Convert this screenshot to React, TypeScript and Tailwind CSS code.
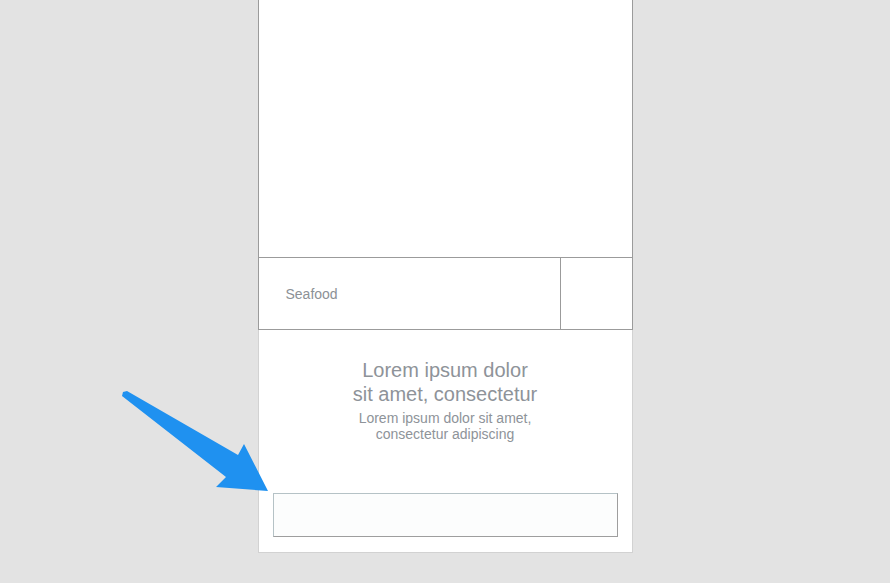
export default function App() {
  return (
    <div
      className="relative min-h-[583px] w-full bg-[#e3e3e3] flex justify-center"
      style={{ fontFamily: '"Liberation Sans", Arial, sans-serif' }}
    >
      <div className="w-[375px] h-[553px] bg-white border-l border-r border-b border-[#d2d2d2] flex flex-col">
        <div className="h-[258px] border-l border-r border-b border-[#9b9b9b] -mx-px" />
        <div className="h-[72px] flex border-l border-r border-b border-[#9b9b9b] -mx-px">
          <div className="flex-1 flex items-center pl-[27px] pt-px text-[14px] text-[#8c9196] border-r border-[#9b9b9b]">
            Seafood
          </div>
          <div className="w-[71px]" />
        </div>
        <div className="pt-[28px] flex flex-col items-center text-center text-[#8e9399]">
          <p className="text-[20px] leading-[24px]">
            Lorem ipsum dolor
            <br />
            sit amet, consectetur
          </p>
          <p className="mt-[4px] text-[14px] leading-[16px]">
            Lorem ipsum dolor sit amet,
            <br />
            consectetur adipiscing
          </p>
        </div>
        <div className="mt-auto px-[14px] pb-[15px]">
          <div className="h-[44px] bg-[#fcfdfd] border border-t-[#b5c2c6] border-l-[#b5c2c6] border-r-[#9e9e9e] border-b-[#9e9e9e]" />
        </div>
      </div>

      <svg
        className="absolute left-0 top-0"
        width="890"
        height="583"
        viewBox="0 0 890 583"
      >
        <polygon
          points="123,392 127,391 238,455 244,444 268,491 216,487 226,477 122,396"
          fill="#1f91f0"
        />
      </svg>
    </div>
  );
}
